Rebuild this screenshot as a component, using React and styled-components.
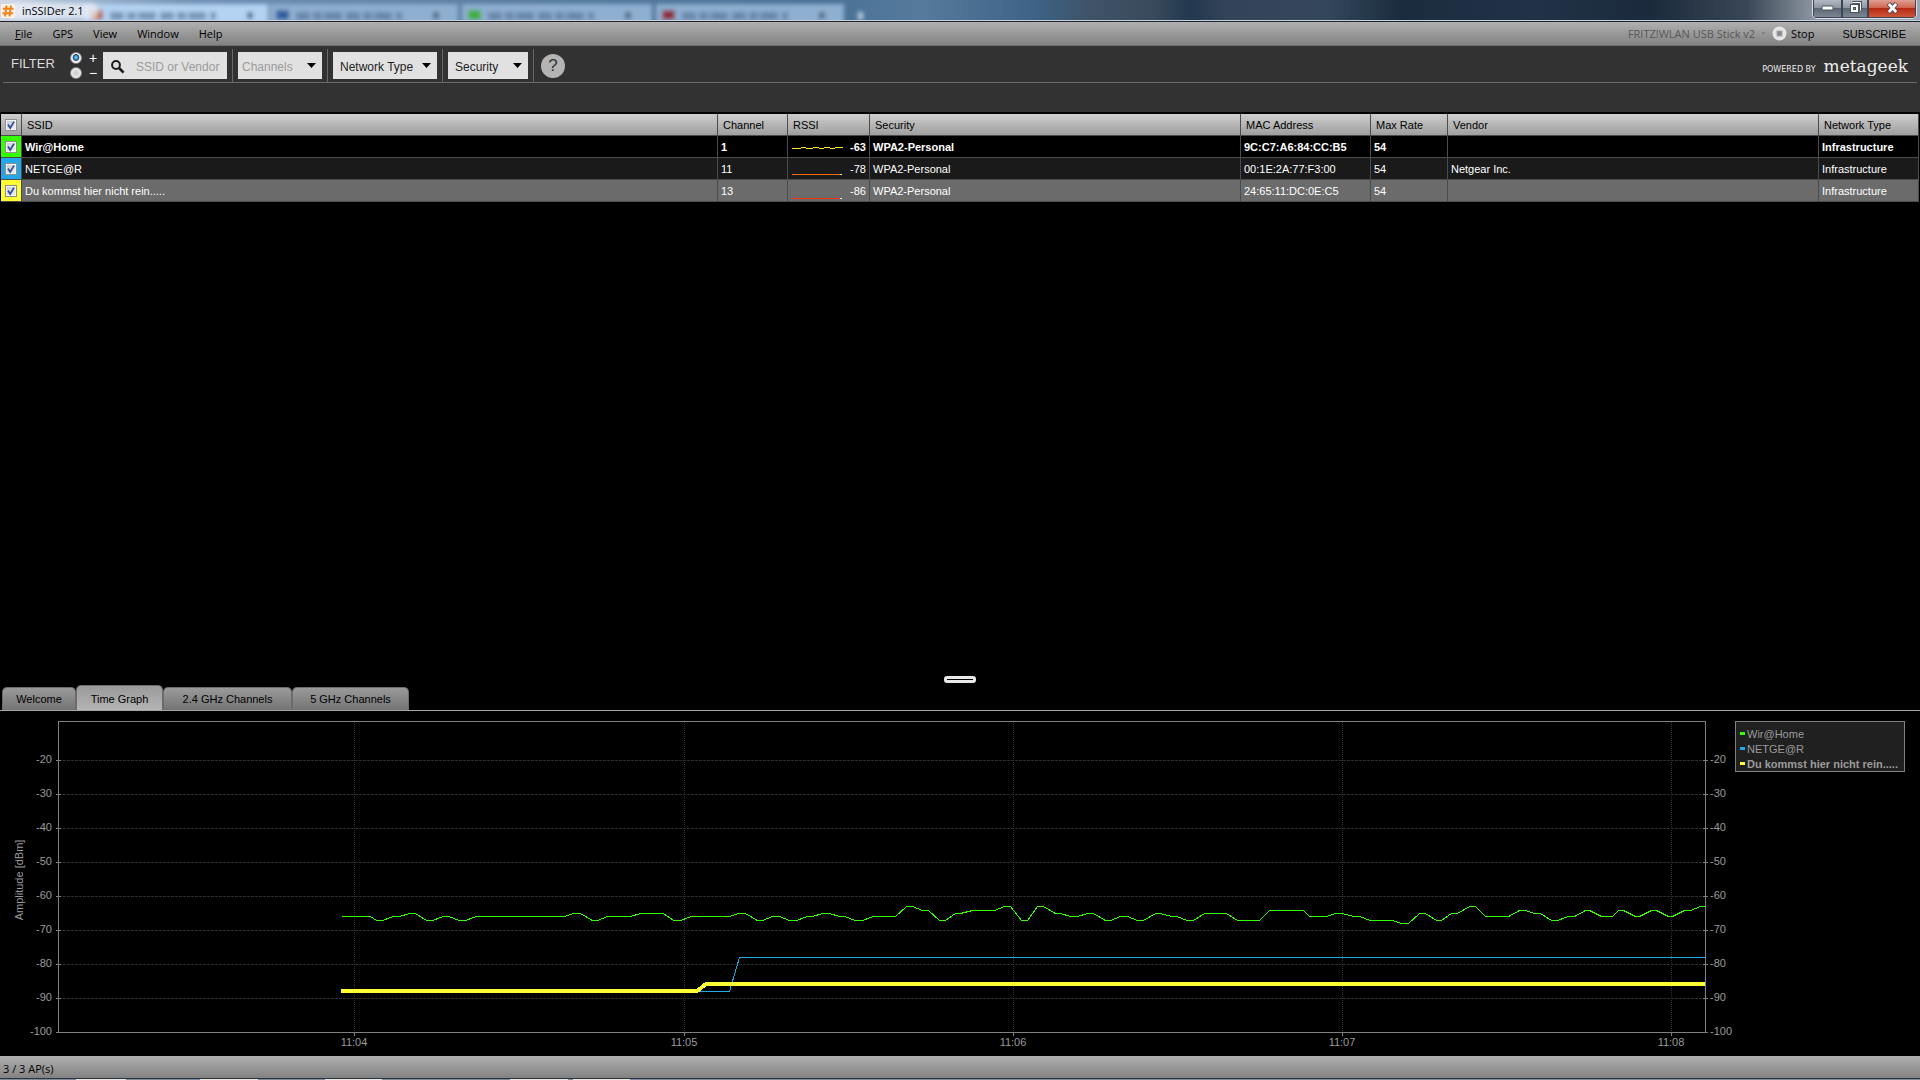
import React, { Fragment, useState } from 'react';
import styled, { createGlobalStyle, css } from 'styled-components';

const MENU = ['File', 'GPS', 'View', 'Window', 'Help'];

const TABS = [
  { name: 'Welcome', width: 74 },
  { name: 'Time Graph', width: 87 },
  { name: '2.4 GHz Channels', width: 129 },
  { name: '5 GHz Channels', width: 117 },
];

const COLUMNS = [
  { name: 'SSID' },
  { name: 'Channel', width: 70 },
  { name: 'RSSI', width: 82 },
  { name: 'Security', width: 371 },
  { name: 'MAC Address', width: 130 },
  { name: 'Max Rate', width: 77 },
  { name: 'Vendor', width: 371 },
  { name: 'Network Type', width: 100 },
];

const NETWORKS = [
  {
    ssid: 'Wir@Home',
    color: '#33ff00',
    channel: 1,
    rssi: -63,
    spark: '0,12 8,12 10,11 13,11 15,12 20,12 22,11 26,11 28,12 31,12 33,11 37,11 39,12 42,12 44,11 51,11',
    sparkColor: '#ffe21a',
    mac: '9C:C7:A6:84:CC:B5',
    vendor: '',
    look: 'first',
  },
  {
    ssid: 'NETGE@R',
    color: '#22a8e8',
    channel: 11,
    rssi: -78,
    spark: '0,16 48,16',
    sparkColor: '#ff6a00',
    mac: '00:1E:2A:77:F3:00',
    vendor: 'Netgear Inc.',
    look: 'odd',
  },
  {
    ssid: 'Du kommst hier nicht rein.....',
    color: '#ffff33',
    channel: 13,
    rssi: -86,
    spark: '0,18 48,18',
    sparkColor: '#ff2d00',
    mac: '24:65:11:DC:0E:C5',
    vendor: '',
    look: 'selected',
  },
];

// [x, dBm]
const HOME_SIGNAL = [
  [341, -66], [370, -66], [376, -67], [382, -67], [393, -66], [399, -66], [409, -65], [415, -65],
  [426, -67], [432, -67], [443, -66], [448, -66], [459, -67], [465, -67], [476, -66], [564, -66],
  [573, -65], [580, -65], [592, -67], [597, -67], [607, -66], [630, -66], [640, -65], [663, -65],
  [673, -67], [680, -67], [691, -66], [729, -66], [738, -65], [745, -65], [757, -67], [762, -67],
  [772, -66], [779, -66], [789, -67], [796, -67], [807, -66], [812, -66], [822, -65], [829, -65],
  [839, -66], [844, -66], [855, -67], [862, -67], [873, -66], [895, -66], [906, -63], [912, -63],
  [922, -64], [928, -64], [939, -67], [945, -67], [955, -65], [960, -65], [972, -64], [994, -64],
  [1004, -63], [1010, -63], [1021, -67], [1027, -67], [1037, -63], [1043, -63], [1055, -65],
  [1060, -65], [1070, -66], [1077, -66], [1087, -65], [1093, -65], [1105, -67], [1110, -67],
  [1120, -66], [1127, -66], [1137, -67], [1143, -67], [1155, -65], [1160, -65], [1171, -66],
  [1176, -66], [1187, -67], [1193, -67], [1204, -65], [1226, -65], [1237, -67], [1259, -67],
  [1269, -64], [1303, -64], [1309, -66], [1326, -66], [1335, -65], [1342, -65], [1353, -66],
  [1359, -66], [1370, -67], [1392, -67], [1401, -68], [1408, -68], [1419, -65], [1425, -65],
  [1436, -67], [1441, -67], [1451, -65], [1457, -65], [1469, -63], [1475, -63], [1485, -66],
  [1508, -66], [1519, -64], [1525, -64], [1534, -65], [1540, -65], [1551, -67], [1557, -67],
  [1568, -66], [1574, -66], [1585, -64], [1589, -64], [1601, -66], [1612, -66], [1618, -64],
  [1623, -64], [1635, -66], [1639, -66], [1651, -64], [1656, -64], [1668, -66], [1672, -66],
  [1684, -64], [1690, -64], [1700, -63], [1705, -63],
];

const SERIES = [
  { color: '#33ff00', width: 1, points: HOME_SIGNAL },
  { color: '#22a8e8', width: 1, points: [[341, -88], [729, -88], [739, -78], [1705, -78]] },
  { color: '#ffff33', width: 4, points: [[341, -88], [697, -88], [706, -86], [1705, -86]] },
];

const LEVELS = [-20, -30, -40, -50, -60, -70, -80, -90, -100];

const TIMES = [
  { label: '11:04', x: 354 },
  { label: '11:05', x: 684 },
  { label: '11:06', x: 1013 },
  { label: '11:07', x: 1342 },
  { label: '11:08', x: 1671 },
];

const levelY = level => Math.round(321 - (level + 100) * 3.4);

// odd widths sit on the half pixel, even ones on the whole
const toPoints = ({ points, width }) => {
  const half = width % 2 ? 0.5 : 0;
  return points.map(([x, level]) => `${x + half},${levelY(level) + half}`).join(' ');
};

// browser tabs shining through the glass title bar
const GLASS_TABS = [
  { x: 84, width: 184, icon: '#b8674f' },
  { x: 270, width: 188, icon: '#2d5f9e' },
  { x: 462, width: 190, icon: '#3fae3a' },
  { x: 656, width: 188, icon: '#8e2f3c' },
];

const Glass = () => (
  <GlassArt preserveAspectRatio='none' viewBox='0 0 1920 20' aria-hidden='true'>
    <defs>
      <linearGradient id='sky'>
        <stop offset='0' stopColor='#d5d9e6' />
        <stop offset='0.03' stopColor='#a9bdd4' />
        <stop offset='0.1' stopColor='#6f8fb2' />
        <stop offset='0.3' stopColor='#55799c' />
        <stop offset='0.43' stopColor='#4a7296' />
        <stop offset='0.48' stopColor='#557a9b' />
        <stop offset='0.54' stopColor='#3d6285' />
        <stop offset='0.57' stopColor='#3f5266' />
        <stop offset='0.6' stopColor='#3a4a5c' />
        <stop offset='0.62' stopColor='#22394f' />
        <stop offset='0.64' stopColor='#344458' />
        <stop offset='0.69' stopColor='#35475b' />
        <stop offset='0.73' stopColor='#1a2c3e' />
        <stop offset='0.8' stopColor='#213247' />
        <stop offset='0.86' stopColor='#1b2a3c' />
        <stop offset='0.91' stopColor='#3a4756' />
        <stop offset='0.945' stopColor='#8d96a1' />
        <stop offset='1' stopColor='#9aa6b4' />
      </linearGradient>
      <filter id='soft' x='-10%' y='-50%' width='120%' height='200%'>
        <feGaussianBlur stdDeviation='2' />
      </filter>
    </defs>
    <rect width='1920' height='20' fill='url(#sky)' />
    <g filter='url(#soft)'>
      {GLASS_TABS.map((tab, index) => (
        <Fragment key={tab.x}>
          <rect x={tab.x} y='4' width={tab.width} height='20' fill={index === 0 ? '#b4d3f3' : '#8fafd0'} />
          <rect x={tab.x + 6} y='10' width='13' height='10' fill={tab.icon} />
          <path
            d={`M${tab.x + 26} 16 h106`}
            stroke='#4f6e94'
            strokeWidth='8'
            strokeDasharray='14 3 9 2 18 4'
            opacity='0.6'
          />
          <rect x={tab.x + 163} y='12' width='6' height='7' fill='#3f587a' opacity='0.8' />
        </Fragment>
      ))}
      <rect x='858' y='12' width='5' height='8' fill='#b9cfe4' />
      <rect x='8' y='3' width='90' height='16' rx='6' fill='#eef2fa' opacity='0.75' />
    </g>
  </GlassArt>
);

const Tick = () => (
  <svg width='12' height='12' viewBox='0 0 12 12' aria-hidden='true'>
    <path d='M3 5.6 L5.2 9 L9 2.6' fill='none' stroke='#35509b' strokeWidth='1.8' />
  </svg>
);

const Check = ({ label }) => {
  const [checked, setChecked] = useState(true);
  return (
    <CheckLabel>
      <CheckInput type='checkbox' aria-label={label} checked={checked} onChange={() => setChecked(!checked)} />
      {checked && <Tick />}
    </CheckLabel>
  );
};

const Dropdown = ({ label, width, muted }) => (
  <DropBox $width={width}>
    <DropSelect aria-label={label} $muted={muted}>
      <option>{label}</option>
    </DropSelect>
    <DropArrow width='9' height='5' viewBox='0 0 9 5' aria-hidden='true'>
      <path d='M0 0 H9 L4.5 5 Z' fill='#000' />
    </DropArrow>
  </DropBox>
);

const TimeGraph = () => (
  <Graph viewBox='0 0 1735 345' role='img' aria-label='Time Graph'>
    <g shapeRendering='crispEdges' fill='none'>
      {LEVELS.slice(0, -1).map(level => (
        <path key={level} d={`M59 ${levelY(level) + 0.5} H1705`} stroke='#2c2c2c' strokeDasharray='3 1' />
      ))}
      {TIMES.map(time => (
        <path key={time.label} d={`M${time.x + 0.5} 11 V321`} stroke='#333' strokeDasharray='1 1' />
      ))}
      {SERIES.map(line => (
        <polyline key={line.color} points={toPoints(line)} stroke={line.color} strokeWidth={line.width} />
      ))}
      <rect x='58.5' y='10.5' width='1647' height='311' stroke='#808080' />
      {LEVELS.map(level => (
        <path key={level} d={`M56 ${levelY(level) + 0.5} h5 M1703 ${levelY(level) + 0.5} h5`} stroke='#808080' />
      ))}
      {TIMES.map(time => (
        <path key={time.label} d={`M${time.x + 0.5} 322 v3`} stroke='#808080' />
      ))}
    </g>
    {LEVELS.map(level => (
      <Fragment key={level}>
        <AxisText x='52' y={levelY(level) + 3} textAnchor='end'>{level}</AxisText>
        <AxisText x='1710' y={levelY(level) + 3}>{level}</AxisText>
      </Fragment>
    ))}
    {TIMES.map(time => (
      <AxisText key={time.label} x={time.x} y='335' textAnchor='middle'>{time.label}</AxisText>
    ))}
    <AxisText transform='translate(23 169) rotate(-90)' textAnchor='middle'>Amplitude [dBm]</AxisText>
  </Graph>
);

const App = () => {
  const [tab, setTab] = useState('Time Graph');

  return (
    <Fragment>
      <GlobalStyle />
      <Window>
        <TitleBar>
          <Glass />
          <AppIcon width='14' height='14' viewBox='0 0 14 14' aria-hidden='true'>
            <rect width='14' height='14' rx='2' fill='#fff4e6' />
            <path d='M5.5 1.5 L4 12.5 M10 1.5 L8.5 12.5 M1.8 4.7 H12.6 M1.4 9.3 H12.2' stroke='#f5801f' strokeWidth='2' />
          </AppIcon>
          <Title>inSSIDer 2.1</Title>
          <WindowButtons>
            <WindowButton $width={29} aria-label='Minimize'>
              <svg width='13' height='7' viewBox='0 0 13 7'>
                <rect x='1' y='2' width='11' height='4' rx='1' fill='#fff' stroke='#4b5360' />
              </svg>
            </WindowButton>
            <WindowButton $width={26} aria-label='Restore'>
              <svg width='13' height='13' viewBox='0 0 13 13'>
                <path d='M3.5 1.5 H11.5 V9.5' fill='none' stroke='#4b5360' strokeWidth='3' />
                <path d='M3.5 1.5 H11.5 V9.5' fill='none' stroke='#fff' />
                <rect x='1.5' y='3.5' width='8' height='8' fill='#fff' stroke='#4b5360' />
                <rect x='4.5' y='6.5' width='2' height='2' fill='#8a93a0' stroke='#4b5360' />
              </svg>
            </WindowButton>
            <WindowButton $width={48} $close aria-label='Close'>
              <svg width='13' height='12' viewBox='0 0 13 12'>
                <path d='M2.5 1.5 L10.5 10.5 M10.5 1.5 L2.5 10.5' stroke='#4d4550' strokeWidth='4.6' />
                <path d='M2.8 2 L10.2 10 M10.2 2 L2.8 10' stroke='#fff' strokeWidth='2.8' />
              </svg>
            </WindowButton>
          </WindowButtons>
        </TitleBar>

        <MenuBar>
          {MENU.map(item => (
            <MenuItem key={item}>{item === 'File' ? <><u>F</u>ile</> : item}</MenuItem>
          ))}
          <MenuRight>
            <Adapter>FRITZ!WLAN USB Stick v2</Adapter>
            <svg width='5' height='3' viewBox='0 0 5 3' aria-hidden='true'>
              <path d='M0 0 H5 L2.5 3 Z' fill='#858585' />
            </svg>
            <StopButton>
              <svg width='15' height='15' viewBox='0 0 15 15' aria-hidden='true'>
                <circle cx='7.5' cy='7.5' r='7' fill='#e6e6e6' />
                <rect x='5' y='5' width='5' height='5' fill='#888' stroke='#aaa' />
              </svg>
              Stop
            </StopButton>
            <Subscribe href='#subscribe'>SUBSCRIBE</Subscribe>
          </MenuRight>
        </MenuBar>

        <FilterBar>
          <FilterRow>
            <FilterTitle>FILTER</FilterTitle>
            <Radios>
              <RadioLabel>
                <Radio type='radio' name='mode' defaultChecked />+
              </RadioLabel>
              <RadioLabel>
                <Radio type='radio' name='mode' />−
              </RadioLabel>
            </Radios>
            <Search>
              <svg width='14' height='14' viewBox='0 0 14 14' aria-hidden='true'>
                <circle cx='5' cy='5' r='3.9' fill='none' stroke='#1c1c1c' strokeWidth='2' />
                <path d='M8 8 L12.6 12.6' stroke='#1c1c1c' strokeWidth='2.6' />
              </svg>
              <SearchInput aria-label='SSID or Vendor' placeholder='SSID or Vendor' />
            </Search>
            <Divider />
            <Dropdown label='Channels' width={84} muted />
            <Divider />
            <Dropdown label='Network Type' width={104} />
            <Divider />
            <Dropdown label='Security' width={80} />
            <Divider />
            <HelpButton aria-label='Help'>?</HelpButton>
            <Brand>
              <span>POWERED BY</span>
              <BrandName>metageek</BrandName>
            </Brand>
          </FilterRow>
        </FilterBar>

        <ListArea>
          <Table>
            <colgroup>
              <Col $width={21} />
              {COLUMNS.map(column => (
                <Col key={column.name} $width={column.width} />
              ))}
            </colgroup>
            <thead>
              <tr>
                <HeadCell $tight>
                  <Check label='Select all' />
                </HeadCell>
                {COLUMNS.map(column => (
                  <HeadCell key={column.name}>{column.name}</HeadCell>
                ))}
              </tr>
            </thead>
            <tbody>
              {NETWORKS.map(item => (
                <Row key={item.ssid} $look={item.look}>
                  <ColorCell $color={item.color}>
                    <Check label={item.ssid} />
                  </ColorCell>
                  <Cell>{item.ssid}</Cell>
                  <Cell>{item.channel}</Cell>
                  <Cell>
                    <Signal>
                      <svg width='52' height='21' viewBox='-1 0 52 21' shapeRendering='crispEdges' aria-hidden='true'>
                        <polyline points={item.spark} fill='none' stroke={item.sparkColor} transform='translate(0 0.5)' />
                        {item.look !== 'first' && (
                          <rect x='48' y={item.look === 'odd' ? 16 : 18} width='2' height='1' fill='#fff' />
                        )}
                      </svg>
                      {item.rssi}
                    </Signal>
                  </Cell>
                  <Cell>WPA2-Personal</Cell>
                  <Cell>{item.mac}</Cell>
                  <Cell>54</Cell>
                  <Cell>{item.vendor}</Cell>
                  <Cell>Infrastructure</Cell>
                </Row>
              ))}
            </tbody>
          </Table>
          <Grip />
        </ListArea>

        <TabBar role='tablist'>
          {TABS.map(item => (
            <Tab
              key={item.name}
              role='tab'
              aria-selected={tab === item.name}
              $width={item.width}
              $active={tab === item.name}
              onClick={() => setTab(item.name)}
            >
              {item.name}
            </Tab>
          ))}
        </TabBar>

        <ChartPanel>
          <TimeGraph />
          <Legend>
            {NETWORKS.map(item => (
              <LegendItem key={item.ssid} $color={item.color} $strong={item.look === 'selected'}>
                {item.ssid}
              </LegendItem>
            ))}
          </Legend>
        </ChartPanel>

        <StatusBar>3 / 3 AP(s)</StatusBar>
        <TaskbarEdge />
      </Window>
    </Fragment>
  );
};

export default App;

const sans = `'Liberation Sans', Arial, sans-serif`;
const segoe = `'Open Sans', 'Noto Sans', sans-serif`;

const barGradient = css`
  background: linear-gradient(#b0b0b0, #828282);
`;

const GlobalStyle = createGlobalStyle`
  * {
    box-sizing: border-box;
  }
  body {
    margin: 0;
    background: #000;
    font: 11px/14px ${sans};
  }
  button, input, select {
    margin: 0;
    padding: 0;
    border: 0;
    background: none;
    color: inherit;
    font: inherit;
  }
  svg {
    display: block;
    flex-shrink: 0;
  }
`;

const Window = styled.div`
  display: flex;
  flex-direction: column;
  min-height: 100vh;
`;

const TitleBar = styled.header`
  position: relative;
  display: flex;
  height: 22px;
  padding-right: 3px;
  border-bottom: 1px solid #20242c;
  box-shadow: inset 0 -1px 0 #c5d0dc;
`;

const GlassArt = styled.svg`
  position: absolute;
  top: 0;
  left: 0;
  width: 100%;
  height: 20px;
`;

const AppIcon = styled.svg`
  position: relative;
  margin: 4px 7px 0 1px;
`;

const Title = styled.h1`
  position: relative;
  flex: 1;
  margin: 2px 0 0;
  font: 11px/18px ${segoe};
  color: #000;
`;

const WindowButtons = styled.div`
  position: relative;
  display: flex;
  height: 19px;
  border: 1px solid #dbe1e8;
  border-top: 0;
  border-radius: 0 0 5px 5px;
  overflow: hidden;
`;

const WindowButton = styled.button`
  display: flex;
  align-items: center;
  justify-content: center;
  width: ${props => props.$width}px;
  padding-bottom: 2px;
  border: 1px solid #3b444f;
  border-top: 0;
  background: ${props =>
    props.$close
      ? 'linear-gradient(#e0a094, #cf6550 45%, #b52b12 50%, #d0553a)'
      : 'linear-gradient(#b3bac2, #8e97a1 45%, #5d6773 50%, #7c8793)'};
`;

const MenuBar = styled.nav`
  ${barGradient}
  display: flex;
  align-items: center;
  gap: 20px;
  height: 24px;
  padding: 0 14px 0 15px;
  border-bottom: 1px solid #6e6e6e;
  font: 11px/16px ${segoe};
`;

const MenuItem = styled.button`
  color: #000;
`;

const MenuRight = styled.div`
  display: flex;
  align-items: center;
  gap: 6px;
  margin-left: auto;
`;

const Adapter = styled.span`
  color: #585858;
`;

const StopButton = styled.button`
  display: flex;
  align-items: center;
  gap: 4px;
`;

const Subscribe = styled.a`
  margin-left: 22px;
  color: #000;
  font-family: ${sans};
  text-decoration: none;
`;

const FilterBar = styled.section`
  height: 66px;
  padding: 3px 3px 0;
  background: #323232;
`;

const FilterRow = styled.div`
  display: flex;
  align-items: center;
  height: 34px;
  border-bottom: 1px solid #696969;
`;

const FilterTitle = styled.h2`
  width: 67px;
  margin: 0;
  padding: 0 0 3px 8px;
  color: #dcdcdc;
  font: 13px/16px ${sans};
`;

const Radios = styled.div`
  display: flex;
  flex-direction: column;
  width: 33px;
`;

const RadioLabel = styled.label`
  display: flex;
  align-items: center;
  gap: 7px;
  color: #fff;
  font: 14px/15px ${sans};
`;

const Radio = styled.input`
  appearance: none;
  width: 12px;
  height: 12px;
  border: 1px solid #8c8c8c;
  border-radius: 50%;
  background: radial-gradient(#d2d2d2 20%, #f4f4f4 80%);

  &:checked {
    background: radial-gradient(circle at 50% 45%, #6cc3ee 10%, #0f4c7e 40%, #f4f4f4 50%);
  }
`;

const Search = styled.label`
  display: flex;
  align-items: center;
  gap: 11px;
  width: 124px;
  height: 27px;
  padding: 2px 0 0 8px;
  background: #e1e1e1;
`;

const SearchInput = styled.input`
  flex: 1;
  min-width: 0;
  height: 25px;
  font-size: 12px;
  color: #222;

  &::placeholder {
    color: #9b9b9b;
    opacity: 1;
  }
`;

const Divider = styled.span`
  align-self: stretch;
  width: 1px;
  margin: 0 5px;
  background: #696969;
`;

const DropBox = styled.div`
  position: relative;
  width: ${props => props.$width}px;
  height: 27px;
  background: #e1e1e1;
`;

const DropSelect = styled.select`
  appearance: none;
  width: 100%;
  height: 100%;
  padding: 3px 0 0 ${props => (props.$muted ? 4 : 7)}px;
  color: ${props => (props.$muted ? '#9b9b9b' : '#222')};
  font-size: 12px;
`;

const DropArrow = styled.svg`
  position: absolute;
  top: 11px;
  right: 6px;
  pointer-events: none;
`;

const HelpButton = styled.button`
  width: 24px;
  height: 24px;
  margin-left: 2px;
  border-radius: 50%;
  background: #b4b4b4;
  color: #323232;
  font-size: 17px;
  line-height: 24px;
`;

const Brand = styled.div`
  display: flex;
  align-items: baseline;
  gap: 8px;
  margin-left: auto;
  padding: 5px 9px 0 0;
  color: #ececec;
  font: 8px/20px 'DejaVu Sans', sans-serif;
`;

const BrandName = styled.span`
  font: 17px/20px 'DejaVu Serif', serif;
`;

const ListArea = styled.main`
  display: flex;
  flex: 1;
  flex-direction: column;
  justify-content: space-between;
  padding: 2px 1px 1px;
`;

const Table = styled.table`
  width: 100%;
  table-layout: fixed;
  border-collapse: separate;
  border-spacing: 0;
`;

const Col = styled.col`
  width: ${props => (props.$width ? `${props.$width}px` : 'auto')};
`;

const cell = css`
  height: 22px;
  padding: 0 3px;
  border-right: 1px solid #4b4b4b;
  border-bottom: 1px solid #4b4b4b;
  text-align: left;
  white-space: nowrap;
`;

const HeadCell = styled.th`
  ${cell}
  padding: 0 ${props => (props.$tight ? 4 : 5)}px;
  background: linear-gradient(#cdcdcd, #9f9f9f);
  color: #000;
  font-weight: normal;
`;

const Row = styled.tr`
  background: ${props => ({ first: '#000', odd: '#1a1a1a', selected: '#6b6b6b' }[props.$look])};
  color: #fff;
  font-weight: ${props => (props.$look === 'first' ? 'bold' : 'normal')};
`;

const Cell = styled.td`
  ${cell}
`;

const ColorCell = styled.td`
  ${cell}
  padding: 0 4px;
  background: ${props => props.$color};
`;

const Signal = styled.div`
  display: flex;
  align-items: center;
  justify-content: space-between;
`;

const CheckLabel = styled.label`
  display: grid;
  width: 12px;
  height: 12px;

  > * {
    grid-area: 1 / 1;
  }
`;

const CheckInput = styled.input`
  appearance: none;
  width: 12px;
  height: 12px;
  border: 1px solid #8e8f8f;
  outline: 1px solid #f4f4f4;
  outline-offset: -2px;
  background: linear-gradient(135deg, #c3c8d0, #f6f6f6);
`;

const Grip = styled.div`
  align-self: center;
  width: 32px;
  height: 7px;
  border: 3px solid #e8e8e8;
  border-radius: 3px;
`;

const TabBar = styled.div`
  display: flex;
  align-items: flex-end;
  height: 27px;
  padding-left: 2px;
  border-bottom: 1px solid #a5a5a5;
`;

const Tab = styled.button`
  width: ${props => props.$width}px;
  height: ${props => (props.$active ? 25 : 23)}px;
  padding-top: ${props => (props.$active ? 1 : 0)}px;
  border: 1px solid #6c6c6c;
  border-bottom: 0;
  border-radius: 5px 5px 0 0;
  background: ${props =>
    props.$active ? 'linear-gradient(#9a9a9a, #b4b4b4)' : 'linear-gradient(#9a9a9a, #747474)'};
  color: #000;
`;

const ChartPanel = styled.section`
  display: flex;
  align-items: flex-start;
  padding-right: 15px;
`;

const Graph = styled.svg`
  flex: 1;
  min-width: 0;
`;

const AxisText = styled.text`
  fill: #9b9b9b;
  font: 11px ${sans};
`;

const Legend = styled.ul`
  width: 170px;
  margin: 10px 0 0;
  padding: 4px 4px 0;
  border: 1px solid #808080;
  background: #202020;
  list-style: none;
`;

const LegendItem = styled.li`
  display: flex;
  align-items: center;
  gap: 2px;
  height: 15px;
  color: #9b9b9b;
  font-size: 11px;
  font-weight: ${props => (props.$strong ? 'bold' : 'normal')};
  white-space: nowrap;

  &::before {
    content: '';
    width: 5px;
    height: 3px;
    background: ${props => props.$color};
  }
`;

const StatusBar = styled.footer`
  ${barGradient}
  height: 22px;
  padding: 4px 3px 0;
  font: 11px/18px ${segoe};
`;

const TaskbarEdge = styled.div`
  height: 2px;
  border-top: 1px solid #2b3440;
  background: linear-gradient(
    90deg,
    #7d8b98 76px,
    #e8e8e0 76px 126px,
    #7d8b98 126px 200px,
    #e8e8e0 200px 258px,
    #7d8b98 258px 325px,
    #e8e8e0 325px 382px,
    #7d8b98 382px 510px,
    #e8e8e0 510px 568px,
    #7d8b98 568px 573px,
    #e8e8e0 573px 630px,
    #7d8b98 630px
  );
`;
